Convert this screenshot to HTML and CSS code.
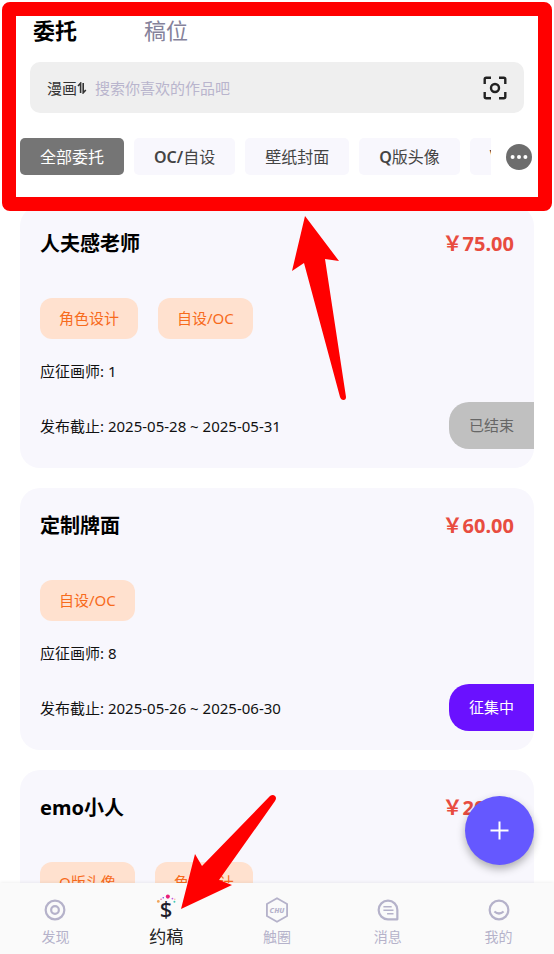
FILE: index.html
```html
<!DOCTYPE html>
<html lang="zh-CN">
<head>
<meta charset="utf-8">
<meta name="viewport" content="width=device-width, initial-scale=1">
<title>约稿</title>
<link rel="stylesheet" href="styles.css">
</head>
<body>
<div class="app">
  <header class="header">
    <div class="tabs">
      <button class="tab tab-active" type="button">委托</button>
      <button class="tab" type="button">稿位</button>
    </div>
    <form class="search">
      <button class="search-type" type="button">漫画<svg width="10" height="12" viewBox="0 0 10 12" fill="none" stroke="currentColor" stroke-width="1.6"><path d="M1 4 3.6 1.2V11M6.2 1v9.8L8.8 8"/></svg></button>
      <input class="search-input" type="text" aria-label="搜索" placeholder="搜索你喜欢的作品吧">
      <button class="scan" type="button" aria-label="扫描"><svg width="24" height="24" viewBox="0 0 24 24" fill="none" stroke="currentColor" stroke-width="2.4"><path d="M1.7 8V3.2q0-1.500 1.500-1.500H8M16 1.700h4.800q1.500 0 1.500 1.500V8M22.300 16v4.800q0 1.500-1.500 1.500H16M8 22.300H3.200q-1.500 0-1.500-1.500V16"/><circle cx="12" cy="12" r="4"/></svg></button>
    </form>
    <div class="filters">
      <div class="chips">
        <button class="chip chip-active" type="button">全部委托</button>
        <button class="chip" type="button"><b>OC/</b>自设</button>
        <button class="chip" type="button">壁纸封面</button>
        <button class="chip" type="button"><b>Q</b>版头像</button>
        <button class="chip" type="button"><b>V</b></button>
      </div>
      <button class="more" type="button" aria-label="更多"><svg width="26" height="26" viewBox="0 0 26 26"><circle cx="13" cy="13" r="13" fill="#6d6d6d"/><g fill="#fff"><circle cx="6.6" cy="13" r="2"/><circle cx="13" cy="13" r="2"/><circle cx="19.4" cy="13" r="2"/></g></svg></button>
    </div>
  </header>

  <main class="list">
    <article class="card">
      <div class="card-head"><h2 class="title">人夫感老师</h2><span class="price">￥75.00</span></div>
      <div class="tags"><span class="tag">角色设计</span><span class="tag">自设/OC</span></div>
      <p class="meta">应征画师: 1</p>
      <div class="card-foot"><p class="meta">发布截止: 2025-05-28 ~ 2025-05-31</p><span class="status status-ended">已结束</span></div>
    </article>
    <article class="card">
      <div class="card-head"><h2 class="title">定制牌面</h2><span class="price">￥60.00</span></div>
      <div class="tags"><span class="tag">自设/OC</span></div>
      <p class="meta">应征画师: 8</p>
      <div class="card-foot"><p class="meta">发布截止: 2025-05-26 ~ 2025-06-30</p><span class="status status-open">征集中</span></div>
    </article>
    <article class="card">
      <div class="card-head"><h2 class="title">emo小人</h2><span class="price">￥20.00</span></div>
      <div class="tags"><span class="tag">Q版头像</span><span class="tag">角色设计</span></div>
    </article>
  </main>

  <nav class="nav">
    <a class="nav-item" href="#">
      <svg class="nav-icon" viewBox="0 0 24 24" fill="none" stroke="currentColor" stroke-width="2.4"><circle cx="12" cy="12" r="10.2"/><circle cx="12" cy="12" r="4.2"/></svg>
      <span>发现</span>
    </a>
    <a class="nav-item nav-active" href="#">
      <svg class="nav-icon" viewBox="0 0 24 24"><text class="dollar" x="12" y="20" text-anchor="middle">$</text><circle cx="14" cy="-2.6" r="2.2" fill="#e91e78"/><circle cx="9" cy="-1.4" r=".9" fill="#7a4de0"/><circle cx="6.6" cy=".2" r=".8" fill="#e85aa0"/><circle cx="3.6" cy="2.6" r="1.5" fill="#f2a65a"/><circle cx="19" cy="-.5" r="1" fill="#c65be0"/><circle cx="21.6" cy=".2" r=".8" fill="#ffb4a0"/><circle cx="21.2" cy="3" r="1.1" fill="#3fc8b8"/></svg>
      <span>约稿</span>
    </a>
    <a class="nav-item" href="#">
      <svg class="nav-icon" viewBox="0 0 24 24" fill="none" stroke="currentColor" stroke-width="2"><path d="M12-.8 23 5.4v13.200L12 24.800 1 18.600V5.400z" stroke-linejoin="round"/><text class="chu" x="12" y="15" text-anchor="middle">CHU</text></svg>
      <span>触圈</span>
    </a>
    <a class="nav-item" href="#">
      <svg class="nav-icon" viewBox="0 0 24 24" fill="none" stroke="currentColor" stroke-width="2.4"><path d="M22.200 22.200H12A10.200 10.200 0 1 1 22.200 12z" stroke-linejoin="round"/><path d="M7 8.500h9M7 12.300h11M11 16.100h7" stroke-width="1.8"/></svg>
      <span>消息</span>
    </a>
    <a class="nav-item" href="#">
      <svg class="nav-icon" viewBox="0 0 24 24" fill="none" stroke="currentColor" stroke-width="2.4"><circle cx="12" cy="12" r="10.2"/><path d="M7 13.600q5 4.400 10 0"/></svg>
      <span>我的</span>
    </a>
  </nav>

  <button class="fab" type="button" aria-label="发布"><svg width="19" height="19" viewBox="0 0 19 19" stroke="#fff" stroke-width="2"><path d="M9.500 0.500v18M0.500 9.500h18"/></svg></button>

  <div class="frame"></div>
  <svg class="arrow arrow-up" width="56" height="186" viewBox="0 0 56 186" fill="#f00"><path d="M14 0 48 45 34 43 55 181Q55 184 52.500 184 50 184 49 181L13 47 1 55Z"/></svg>
  <svg class="arrow arrow-down" width="98" height="117" viewBox="0 0 98 117" fill="#f00"><path d="M1 115 15 60 22 72 90 2Q93 0 95 2 97 4 95 7L39 86 52 91Z"/></svg>
</div>
</body>
</html>
```
FILE: styles.css
```css
* { box-sizing: border-box; }

body {
  margin: 0;
  background: #fff;
  color: #111;
  font-family: "Noto Sans", "Noto Sans CJK SC", sans-serif;
  font-size: 15px;
}

button, input {
  margin: 0;
  padding: 0;
  border: 0;
  background: none;
  color: inherit;
  font: inherit;
}

svg { display: block; flex: none; }
h2, p { margin: 0; }

.app {
  position: relative;
  display: flex;
  flex-direction: column;
  height: 100vh;
  overflow: hidden;
}

.header { flex: none; padding-top: 14px; }

.tabs { display: flex; gap: 67px; padding: 0 33px; }
.tab { font-size: 22px; line-height: 32px; color: #85829b; }
.tab-active { color: #000; font-weight: 700; }

.search {
  display: flex;
  align-items: center;
  height: 51px;
  margin: 16px 30px 25px;
  padding: 0 17px;
  border-radius: 10px;
  background: #efefef;
}
.search-type { display: flex; align-items: center; color: #333; }
.search-input { flex: 1; min-width: 0; margin-left: 8px; outline: 0; }
.search-input::placeholder { color: #b9b5cd; opacity: 1; }
.scan { color: #222; }

.filters {
  display: flex;
  align-items: center;
  gap: 15px;
  padding: 0 22px 31px 20px;
}
.chips { display: flex; flex: 1; gap: 10px; min-width: 0; overflow: hidden; }
.chip {
  flex: none;
  height: 37px;
  padding: 0 20px 2px;
  border-radius: 5px;
  background: #f8f7fd;
  color: #444;
  font-size: 16px;
}
.chip b { font-weight: 600; }
.chip-active { background: #757575; color: #fff; }

.list {
  display: flex;
  flex: 1;
  flex-direction: column;
  gap: 20px;
  min-height: 0;
  padding: 0 20px;
  overflow: hidden;
}
.card {
  flex: none;
  padding: 20px 0 19px 20px;
  border-radius: 20px;
  background: #f8f7fd;
}
.card-head {
  display: flex;
  align-items: center;
  justify-content: space-between;
  height: 32px;
  padding-right: 20px;
}
.title { color: #000; font-size: 20px; font-weight: 700; }
.price { color: #e84c40; font-size: 20px; font-weight: 700; }
.tags { display: flex; gap: 20px; margin: 40px 0 20px; }
.tag {
  height: 41px;
  padding: 0 19px;
  border-radius: 12px;
  background: #ffe1cf;
  color: #f76b1c;
  line-height: 40px;
}
.meta { line-height: 24px; }
.card-foot {
  display: flex;
  align-items: center;
  justify-content: space-between;
  margin-top: 19px;
}
.status {
  padding: 0 20px;
  border-radius: 20px 0 0 20px;
  line-height: 47px;
}
.status-ended { background: #c0c0c0; color: #666; }
.status-open { background: #6a11ff; color: #fff; }

.nav {
  position: relative;
  display: grid;
  flex: none;
  grid-template-columns: repeat(5, 1fr);
  height: 71px;
  background: #fafafa;
  box-shadow: 0 -1px 3px rgba(0, 0, 0, 0.06);
}
.nav-item {
  display: flex;
  flex-direction: column;
  align-items: center;
  gap: 4px;
  padding-top: 16px;
  color: #b5b2ca;
  font-size: 14px;
  line-height: 24px;
  text-decoration: none;
}
.nav-icon { width: 22px; height: 22px; overflow: visible; }
.nav-active { color: #222; font-size: 17px; }
.dollar { fill: #1e1e2a; font-size: 24px; font-weight: 500; }
.chu {
  fill: currentColor;
  stroke: none;
  font-size: 8px;
  font-style: italic;
  font-weight: 800;
}

.fab {
  position: absolute;
  right: 20px;
  bottom: 89px;
  display: grid;
  place-items: center;
  width: 69px;
  height: 69px;
  border-radius: 50%;
  background: #6558ff;
  box-shadow: 0 4px 8px rgba(0, 0, 0, 0.3);
}

.frame {
  position: absolute;
  top: 2px;
  right: 2px;
  left: 2px;
  height: 209px;
  border: 14px solid #f00;
  border-radius: 8px;
  pointer-events: none;
}
.arrow { position: absolute; pointer-events: none; }
.arrow-up { top: 216px; left: 291px; }
.arrow-down { bottom: 43px; left: 180px; }
```
